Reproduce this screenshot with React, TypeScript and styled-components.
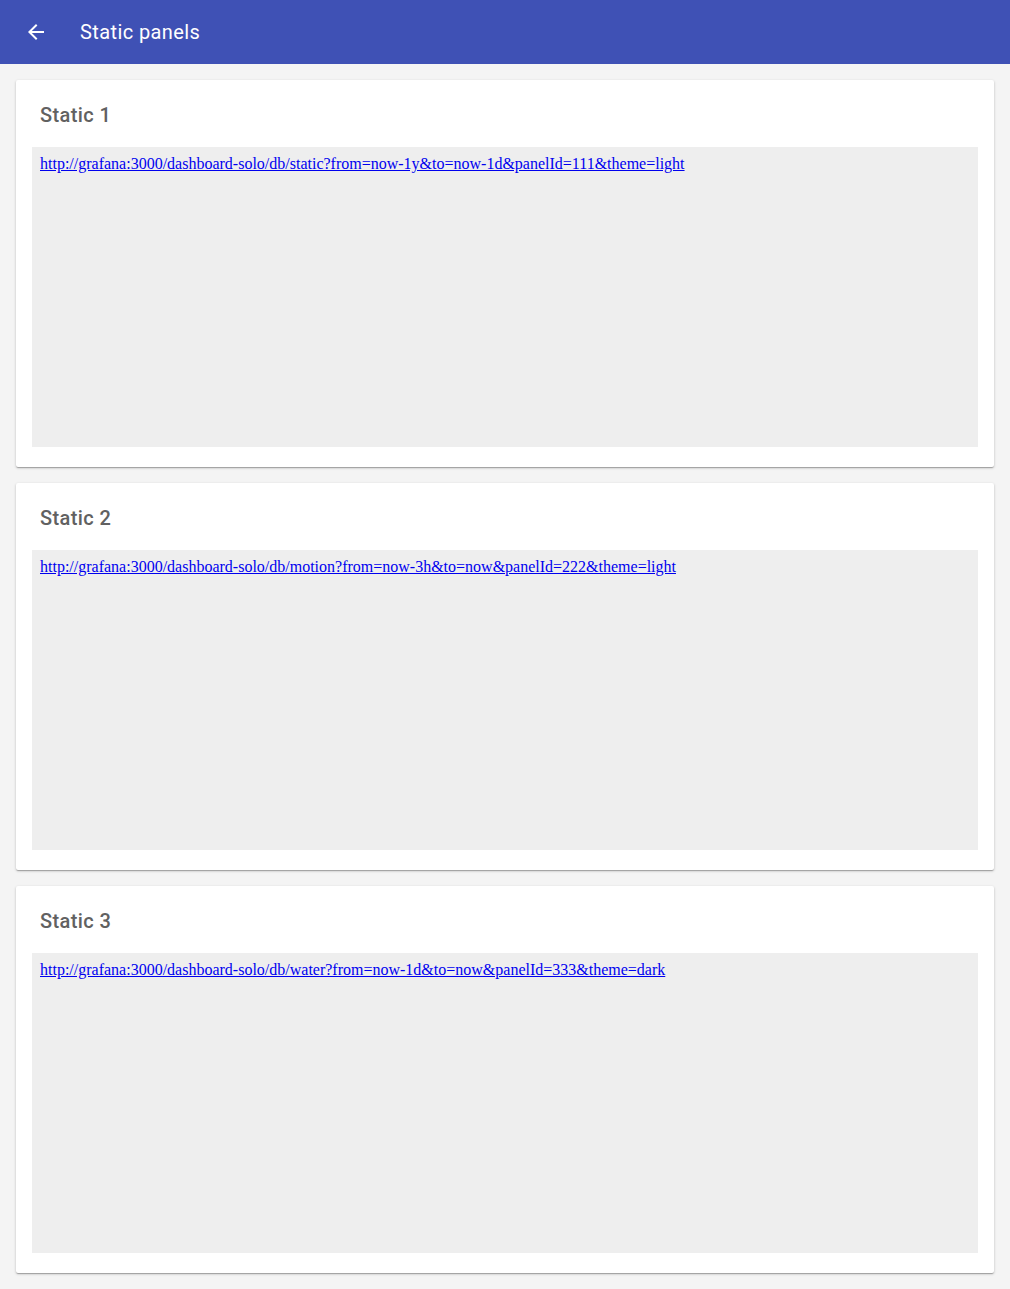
import React from "react";
import styled, { createGlobalStyle } from "styled-components";

const Global = createGlobalStyle`
  html, body { margin: 0; padding: 0; background: #f4f4f4; }
  body { font-family: Roboto, "Noto Sans", Arial, sans-serif; }
`;

const AppBar = styled.header`
  height: 64px;
  background: #3f51b5;
  color: #fff;
  display: flex;
  align-items: center;
  padding: 0 24px;
  box-sizing: border-box;
  gap: 32px;
`;

const IconButton = styled.button`
  width: 24px;
  height: 24px;
  padding: 0;
  border: 0;
  background: none;
  color: #fff;
  display: flex;
  align-items: center;
  justify-content: center;
  cursor: pointer;
`;

const Title = styled.h1`
  margin: 0;
  font-size: 20px;
  font-weight: 400;
  letter-spacing: 0.4px;
`;

const Main = styled.main`
  display: flex;
  flex-direction: column;
  gap: 16px;
  padding: 16px;
`;

const Card = styled.section`
  background: #fff;
  padding: 16px 16px 20px;
  border-radius: 2px;
  box-shadow: 0 1px 3px rgba(0, 0, 0, 0.2), 0 1px 1px rgba(0, 0, 0, 0.14),
    0 2px 1px -1px rgba(0, 0, 0, 0.12);
`;

const CardTitle = styled.h2`
  margin: 7px 8px 20px;
  font-size: 20px;
  line-height: 24px;
  font-weight: 500;
  letter-spacing: 0.4px;
  color: #616161;
`;

const Frame = styled.div`
  height: 300px;
  background: #eeeeee;
  padding: 8px;
  box-sizing: border-box;
  font-family: "Liberation Serif", "Times New Roman", serif;
  font-size: 16px;
`;

const Link = styled.a`
  color: #0000ee;
  text-decoration: underline;
`;

const panels = [
  { title: "Static 1", url: "http://grafana:3000/dashboard-solo/db/static?from=now-1y&to=now-1d&panelId=111&theme=light" },
  { title: "Static 2", url: "http://grafana:3000/dashboard-solo/db/motion?from=now-3h&to=now&panelId=222&theme=light" },
  { title: "Static 3", url: "http://grafana:3000/dashboard-solo/db/water?from=now-1d&to=now&panelId=333&theme=dark" },
];

export default function App() {
  return (
    <>
      <Global />
      <AppBar>
        <IconButton aria-label="back">
          <svg width="24" height="24" viewBox="0 0 24 24" fill="currentColor">
            <path d="M20 11H7.83l5.59-5.59L12 4l-8 8 8 8 1.41-1.41L7.83 13H20v-2z" />
          </svg>
        </IconButton>
        <Title>Static panels</Title>
      </AppBar>
      <Main>
        {panels.map((p) => (
          <Card key={p.title}>
            <CardTitle>{p.title}</CardTitle>
            <Frame>
              <Link href={p.url}>{p.url}</Link>
            </Frame>
          </Card>
        ))}
      </Main>
    </>
  );
}
